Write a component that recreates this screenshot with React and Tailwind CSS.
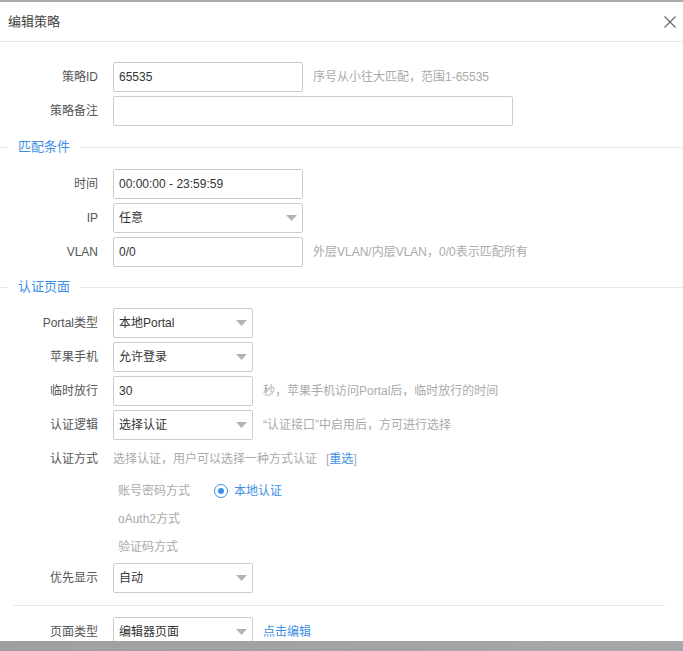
import React from "react";

const FONT = { fontFamily: '"Liberation Sans", "Noto Sans CJK SC", sans-serif' };

function Caret() {
  return (
    <svg width="11" height="6" viewBox="0 0 11 6" className="shrink-0">
      <path d="M0 0 L11 0 L5.5 6 Z" fill="#b3b3b3" />
    </svg>
  );
}

function Row({ label, children }) {
  return (
    <div className="flex items-center h-[30px] mt-[4px]">
      <div className="w-[98px] text-right text-[12px] text-[#555] shrink-0">{label}</div>
      <div className="ml-[15px] flex items-center h-full">{children}</div>
    </div>
  );
}

function Input({ value, width }) {
  return (
    <div
      className={`${width} h-[30px] border border-[#ccc] rounded-[2px] flex items-center pl-[5px] text-[12px] text-[#333] bg-white`}
    >
      {value}
    </div>
  );
}

function Select({ value, width }) {
  return (
    <div
      className={`${width} h-[30px] border border-[#ccc] rounded-[2px] flex items-center justify-between pl-[5px] pr-[5px] text-[12px] text-[#333] bg-white`}
    >
      <span>{value}</span>
      <Caret />
    </div>
  );
}

function Hint({ children }) {
  return <span className="ml-[10px] text-[12px] text-[#aaa] whitespace-nowrap">{children}</span>;
}

function Section({ title, className }) {
  return (
    <div className={`flex items-center h-[20px] ${className}`}>
      <div className="w-[8px] h-px bg-[#e8e8e8]" />
      <span className="px-[10px] text-[13px] text-[#3d8fe6]">{title}</span>
      <div className="flex-1 h-px bg-[#e8e8e8]" />
    </div>
  );
}

export default function App() {
  return (
    <div style={FONT} className="w-[683px] h-[651px] bg-white flex flex-col overflow-hidden border-t-2 border-[#ababab]">
      {/* header */}
      <div className="h-[40px] flex items-center justify-between pl-[8px] pr-[7px] border-b border-[#e8e8e8] shrink-0">
        <span className="text-[13px] text-[#444]">编辑策略</span>
        <svg width="12" height="12" viewBox="0 0 12 12">
          <path d="M0.5 0.5 L11.5 11.5 M11.5 0.5 L0.5 11.5" stroke="#666" strokeWidth="1.1" />
        </svg>
      </div>

      {/* body */}
      <div className="flex-1 overflow-hidden pt-[16px]">
        <Row label="策略ID">
          <Input value="65535" width="w-[190px]" />
          <Hint>序号从小往大匹配，范围1-65535</Hint>
        </Row>
        <Row label="策略备注">
          <Input value="" width="w-[400px]" />
        </Row>

        <Section title="匹配条件" className="mt-[11px] mb-[12px]" />

        <Row label="时间">
          <Input value="00:00:00 - 23:59:59" width="w-[190px]" />
        </Row>
        <Row label="IP">
          <Select value="任意" width="w-[190px]" />
        </Row>
        <Row label="VLAN">
          <Input value="0/0" width="w-[190px]" />
          <Hint>外层VLAN/内层VLAN，0/0表示匹配所有</Hint>
        </Row>

        <Section title="认证页面" className="mt-[10px] mb-[11px]" />

        <Row label="Portal类型">
          <Select value="本地Portal" width="w-[140px]" />
        </Row>
        <Row label="苹果手机">
          <Select value="允许登录" width="w-[140px]" />
        </Row>
        <Row label="临时放行">
          <Input value="30" width="w-[140px]" />
          <Hint>秒，苹果手机访问Portal后，临时放行的时间</Hint>
        </Row>
        <Row label="认证逻辑">
          <Select value="选择认证" width="w-[140px]" />
          <Hint>“认证接口”中启用后，方可进行选择</Hint>
        </Row>
        <Row label="认证方式">
          <span className="text-[12px] text-[#aaa] whitespace-nowrap">选择认证，用户可以选择一种方式认证</span>
          <span className="ml-[9px] text-[12px] text-[#aaa]">
            [<span className="text-[#3d8fe6]">重选</span>]
          </span>
        </Row>

        <div className="mt-[3px] pl-[118px] text-[12px] text-[#aaa]">
          <div className="h-[28px] flex items-center">
            <span className="w-[96px]">账号密码方式</span>
            <span className="w-[14px] h-[14px] rounded-full border border-[#3d8fe6] flex items-center justify-center">
              <span className="w-[6px] h-[6px] rounded-full bg-[#3d8fe6]" />
            </span>
            <span className="ml-[6px] text-[#3d8fe6]">本地认证</span>
          </div>
          <div className="h-[28px] flex items-center">oAuth2方式</div>
          <div className="h-[28px] flex items-center">验证码方式</div>
        </div>

        <div className="-mt-[2px]">
          <Row label="优先显示">
            <Select value="自动" width="w-[140px]" />
          </Row>
        </div>

        <div className="mt-[12px] ml-[13px] mr-[18px] h-px bg-[#e8e8e8]" />

        <div className="mt-[11px]">
          <Row label="页面类型">
            <Select value="编辑器页面" width="w-[140px]" />
            <span className="ml-[10px] text-[12px] text-[#3d8fe6]">点击编辑</span>
          </Row>
        </div>
      </div>

      {/* bottom overlay strip */}
      <div className="h-[10px] shrink-0 bg-gradient-to-r from-[#9d9fa1] to-[#a5a7a9]" />
    </div>
  );
}
